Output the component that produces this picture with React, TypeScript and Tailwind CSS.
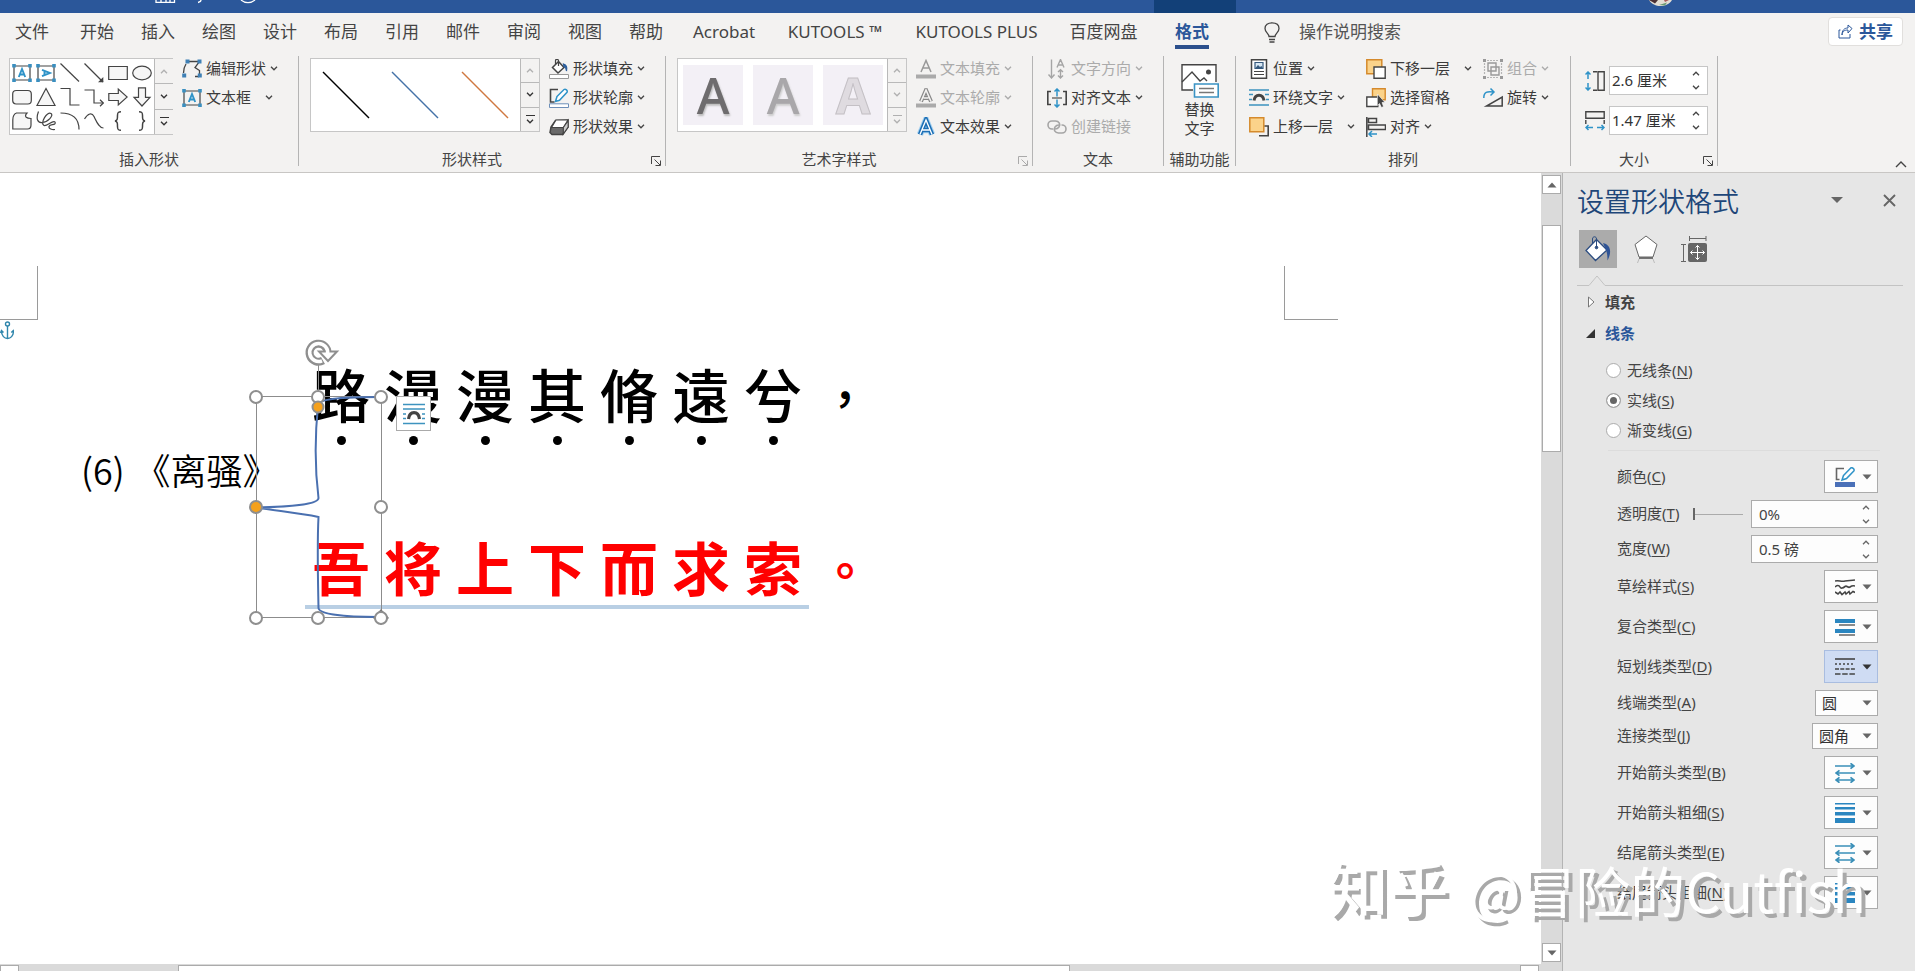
import React from "react";

type IconProps = { children: React.ReactNode; className?: string };

const Icon: React.FC<IconProps> = ({ children, className = "h-5 w-5" }) => (
    <svg viewBox="0 0 20 20" fill="none" stroke="#444" strokeWidth="1.2" className={`shrink-0 ${className}`}>
        {children}
    </svg>
);

const Chevron: React.FC<{ up?: boolean; color?: string }> = ({ up, color = "#444" }) => (
    <svg viewBox="0 0 8 5" fill="none" stroke={color} strokeWidth="1.3" className="h-[5px] w-2 shrink-0">
        <path d={up ? "M1 4.2 4 1.2 7 4.2" : "M1 .8 4 3.8 7 .8"} />
    </svg>
);

const Triangle: React.FC<{ color?: string }> = ({ color = "#666" }) => (
    <svg viewBox="0 0 10 6" className="h-[6px] w-[10px] shrink-0" fill={color}>
        <path d="M.5 .5h9L5 5.5z" />
    </svg>
);

/* Ribbon icons */
const textBoxFrame = (
    <>
        <path d="M2 3h16v14H2z" stroke="#444" />
        <path d="M.2 1h3.600v3.600H.2zM16.200 1h3.600v3.600h-3.600zM.2 15.400h3.600V19H.2zM16.200 15.400h3.600V19h-3.600z" fill="#3a8fc0" stroke="none" />
    </>
);
const letterA = <path d="M6.800 14 10 6l3.200 8M8 11.500h4" stroke="#2f93c8" strokeWidth="1.9" />;

const shapeIcons: React.ReactNode[] = [
    <>{textBoxFrame}{letterA}</>,
    <>{textBoxFrame}<g transform="rotate(90 10 10)">{letterA}</g></>,
    <path d="M.5 .5 19 18.500" />,
    <><path d="M.5 .5 19 19" /><path d="M19.300 14v5.300H14z" fill="#444" stroke="none" /></>,
    <path d="M.7 3.500h18.600v13H.7z" fill="#f6f6f6" />,
    <ellipse cx="10" cy="10" rx="9.3" ry="6.8" fill="#f6f6f6" />,
    <rect x=".7" y="3.5" width="18.6" height="13.5" rx="3.5" fill="#f6f6f6" />,
    <path d="M10 1.500 19 18.500H1z" fill="#f6f6f6" />,
    <path d="M.5 1.500H10v16.500h9.500" />,
    <><path d="M.5 3H10v13h9" /><path d="m16 12.800 3.300 3.200-3.300 3.200" /></>,
    <path d="M.8 6.500h9.500V2l8.900 8-8.900 8v-4.500H.8z" fill="#f6f6f6" />,
    <path d="M6.500 .8h7v9.500H18L10 19 2 10.300h4.500z" fill="#f6f6f6" />,
    <path d="M4.500 2H15c-3.500 4 0 5.500 4 5.500V14c0 3-1 4-3.500 4H.8V9c0-4 1-6 3.700-7z" fill="#f6f6f6" />,
    <path d="M2.500 .5C0 7 1 12 6 11.500 12 11 18 4.500 15 2.500 11 0 4 12 8 14.500c3 1 9-6 11-3.500 1.500 4-5 1.500-6 4.500-.5 2 3 3.500 6 3" />,
    <path d="M.5 2C11 2 19 6 19 18.500" />,
    <path d="M.5 8C4 2 8 1.500 10 5.500c2.500 5 5 11.500 9.500 11.500" />,
    <path d="M13 .8c-3 0-3.500 1-3.500 3.500 0 3.500 0 5.200-2.500 5.700 2.500.5 2.500 2.200 2.500 5.700 0 2.500.5 3.500 3.500 3.500" strokeWidth="1.5" />,
    <path d="M7 .8c3 0 3.500 1 3.500 3.500 0 3.500 0 5.200 2.500 5.700-2.500.5-2.500 2.200-2.500 5.700 0 2.500-.5 3.500-3.500 3.500" strokeWidth="1.5" />,
];

const editShape = (
    <Icon>
        <path d="M6 2.500h11.500l-4.500 6 4.500 3v4.500M13 17.500h4M4 5C2 8 1.500 11 1.500 14" strokeWidth="1.3" />
        <path d="M3.500 .5h4v4h-4zM15.500 .5h4v4h-4zM.2 14.500h4v4h-4zM15.800 14.500h4v4h-4z" fill="#3f80b5" stroke="none" />
    </Icon>
);
const textBox = <Icon>{textBoxFrame}{letterA}</Icon>;
const fillIcon = (
    <Icon>
        <path d="M9.500 2.500 15 8.500 9 14 3.500 8.500z" fill="#fff" strokeWidth="1.5" />
        <path d="M9.500 7V1.500c0-1.500-3-1.500-3 0V5" />
        <path d="M14.500 5c3 1 4 3 3 7-.3-2.500-1-4-2.500-4.500z" fill="#2c5f9e" stroke="#2c5f9e" />
        <path d="M.5 15.500h19v4H.5z" fill="#fff" stroke="#999" strokeWidth="1" />
    </Icon>
);
const outlineIcon = (
    <Icon>
        <path d="M9 1.500H1.500v12.500h4" strokeWidth="1.6" />
        <path d="m8 8.500 7-7c1.500-1 4 1 3 2.800l-7.500 8L6.500 13.500z" fill="#fff" stroke="#2f93c8" strokeWidth="1.5" />
        <path d="M.5 15.800h19v3.700H.5z" fill="#fff" stroke="#6d8fb8" strokeWidth="1" />
    </Icon>
);
const effectIcon = (
    <Icon>
        <path d="M6.500 3.500 18.500 3l.5 7-5.500 7.500H3L1 15.500 2 10z" fill="#6a6a6a" strokeWidth="1.5" />
        <path d="M7 3h12l-4.500 7.500H2.500z" fill="#fff" />
        <path d="m14.300 10.500 4.900-7v6.500l-4.900 7z" fill="#ccc" />
    </Icon>
);
const textFill = (
    <Icon>
        <path d="M5 13 10 1.500 15 13M7 9h6" stroke="#999" strokeWidth="1.5" />
        <path d="M0 15.500h20v4H0z" fill="#aaa" stroke="none" />
    </Icon>
);
const textOutline = (
    <Icon>
        <path d="M5 13.500 10 2l5 11.500M7.500 10h5" stroke="#888" strokeWidth="4" />
        <path d="M5 13.500 10 2l5 11.500M7.500 10h5" stroke="#f3f2f1" strokeWidth="1.6" />
        <path d="M0 15.500h20v4H0z" fill="#aaa" stroke="none" />
    </Icon>
);
const textEffect = (
    <Icon>
        <path d="M4 17.500 10 3l6 14.500M6.500 13h7" stroke="#a5d1f0" strokeWidth="6.5" />
        <path d="M4 17.500 10 3l6 14.500M6.500 13h7" stroke="#1d6fb5" strokeWidth="4.5" />
        <path d="M4 17.500 10 3l6 14.500M6.500 13h7" stroke="#fff" strokeWidth="1.3" />
    </Icon>
);
const textDirection = (
    <Icon>
        <path
            d="M4.500 .5v18M1.500 15.500l3 3.500 3-3.500M13.500 11v8M11 16.500l2.500 2.500 2.500-2.500M11 13l2.500-2.300L16 13M10 8.500l3.500-8 3.500 8M11.300 6h4.400"
            stroke="#a5a5a5"
            strokeWidth="1.4"
        />
    </Icon>
);
const alignText = (
    <Icon>
        <path d="M4 3.500H.8v13H4M16 3.500h3.200v13H16" strokeWidth="1.6" />
        <path d="M5 10h10" stroke="#777" strokeWidth="1.6" />
        <path d="M10 1v7.500M10 19v-7.500M7.500 3.500 10 1l2.500 2.500M7.500 16.500 10 19l2.500-2.500" stroke="#2f93c8" strokeWidth="1.5" />
    </Icon>
);
const linkIcon = (
    <Icon>
        <path d="M6 12H5a4 4 0 0 1 0-8h3.500c3.500 0 5.500 3.500 3.500 6-1 1.500-2.500 2-4 2" stroke="#a5a5a5" strokeWidth="1.6" />
        <path d="M14.500 8h.5a4 4 0 0 1 0 8h-3.500c-3.500 0-5.500-3.500-3.500-6 1-1.500 2.500-2 4-2" stroke="#a5a5a5" strokeWidth="1.6" />
    </Icon>
);
const positionIcon = (
    <Icon>
        <path d="M2.500 .8h15v18.400h-15z" fill="#fff" strokeWidth="1.5" />
        <path d="M6 3.500h8v6H6z" fill="#d8e8f4" stroke="#35597d" />
        <path d="m6 9.500 3-3.500 2 2 1.500-1 1.500 2.500z" fill="#35597d" stroke="none" />
        <path d="M5 12.500h10M5 15.500h10" />
    </Icon>
);
const wrapIcon = (
    <Icon>
        <path d="M0 2h20M0 6.500h4M16 6.500h4M0 11.500h3M17 11.500h3M0 17h20" stroke="#3d93bf" strokeWidth="1.5" />
        <path d="M5 12.500c1-7 9-7 10 0" stroke="#444" strokeWidth="3" />
    </Icon>
);
const forwardIcon = (
    <Icon>
        <path d="M10 18.800h9.200V9h-4" strokeWidth="1.6" />
        <path d="M.8 .8h14v14H.8z" fill="#fbd38a" stroke="#d58a2c" strokeWidth="1.5" />
    </Icon>
);
const backwardIcon = (
    <Icon>
        <path d="M.8 .8h15v14H.8z" fill="#fbd38a" stroke="#d58a2c" strokeWidth="1.5" />
        <path d="M8 8h11.200v11.200H8z" fill="#fff" strokeWidth="1.4" />
    </Icon>
);
const selectionIcon = (
    <Icon>
        <path d="M6.500 .8h12.700v11H6.500z" fill="#fbd38a" stroke="#d58a2c" strokeWidth="1.4" />
        <path d="M.8 9h11v9.500H.8z" fill="#fff" strokeWidth="1.4" />
        <path d="m11.500 6 7.500 8.500h-3l1.500 4-2 1-2-4-2 2z" fill="#444" stroke="#fff" strokeWidth=".6" />
    </Icon>
);
const alignIcon = (
    <Icon>
        <path d="M.8 0v20M2.500 1.500h8v4h-8zM2.500 8h17v4.500h-17z" strokeWidth="1.5" />
        <path d="M11 17H3.500M6 14l-3 3 3 3" stroke="#2f93c8" strokeWidth="1.5" />
    </Icon>
);
const groupIcon = (
    <Icon>
        <path d="M4 1.500h12M4 18.500h12M1.500 4v12M18.500 4v12" stroke="#b5b5b5" strokeDasharray="2 1" />
        <path d="M5 4h8v8H5zM8 8h8v8H8z" stroke="#999" strokeWidth="1.4" />
        <path d="M0 0h3v3H0zM17 0h3v3h-3zM0 17h3v3H0zM17 17h3v3h-3z" fill="#999" stroke="none" />
    </Icon>
);
const rotateIcon = (
    <Icon>
        <path d="M3.500 18h15.700V9z" strokeWidth="1.5" />
        <path d="M.8 10C.8 4 4 3 10.500 4M7.500 .5 11 4 7.500 7.500" stroke="#2f93c8" strokeWidth="1.5" />
    </Icon>
);
const heightIcon = (
    <Icon>
        <path d="M8 .8h4M8 19.200h4M13 .8h6.200v18.400H13z" strokeWidth="1.4" />
        <path d="M3 1v7M3 19v-7M.5 3.500 3 1l2.500 2.500M.5 16.500 3 19l2.500-2.500" stroke="#2f93c8" strokeWidth="1.5" />
    </Icon>
);
const widthIcon = (
    <Icon>
        <path d="M.8 .8h18.400v6.500H.8zM.8 9v4M19.200 9v4" strokeWidth="1.4" />
        <path d="M1 16.500h7M19 16.500h-7M3.500 14 1 16.500 3.500 19M16.500 14l2.500 2.500-2.500 2.500" stroke="#2f93c8" strokeWidth="1.5" />
    </Icon>
);

/* Ribbon pieces */
type CommandProps = { icon: React.ReactNode; label: string; menu?: boolean; wide?: boolean; disabled?: boolean };

const Command: React.FC<CommandProps> = ({ icon, label, menu = true, wide, disabled }) => (
    <button
        disabled={disabled}
        className="flex h-[29px] items-center gap-1 whitespace-nowrap text-[15px] text-[#3b3b3b] disabled:text-[#ababab]"
    >
        {icon}
        <span className={wide ? "mr-[10px]" : ""}>{label}</span>
        {menu && <Chevron color={disabled ? "#ababab" : "#444"} />}
    </button>
);

const GalleryScroll: React.FC<{ dim?: boolean }> = ({ dim }) => (
    <div className="flex w-[19px] shrink-0 flex-col divide-y divide-[#b9b9b9] border-l border-[#b9b9b9] bg-[#f3f2f1]">
        <button aria-label="上一行" className="flex flex-1 items-center justify-center"><Chevron up color="#b0b0b0" /></button>
        <button aria-label="下一行" className="flex flex-1 items-center justify-center"><Chevron color={dim ? "#b0b0b0" : "#333"} /></button>
        <button aria-label="其他" className="flex flex-1 flex-col items-center justify-center gap-[3px]">
            <span className={dim ? "h-px w-[9px] bg-[#b0b0b0]" : "h-px w-[9px] bg-[#333]"} />
            <Chevron color={dim ? "#b0b0b0" : "#333"} />
        </button>
    </div>
);

type GroupProps = { label: string; width: string; inset?: string; launcher?: string; children: React.ReactNode };

const Group: React.FC<GroupProps> = ({ label, width, inset = "", launcher, children }) => (
    <>
        <section className={`flex h-[115px] shrink-0 flex-col ${width}`}>
            <div className={`flex ${inset}`}>{children}</div>
            <div className="mt-auto flex h-5 items-center text-[15px] text-[#444]">
                <span className="flex-1 text-center whitespace-nowrap">{label}</span>
                {launcher && (
                    <button aria-label={`${label}选项`} className="mt-1 w-5 pl-[6px]">
                        <svg viewBox="0 0 10 10" fill="none" stroke={launcher} className="h-[10px] w-[10px]">
                            <path d="M.5 8V.5H9M3.500 3.500 9 9M9.500 4.500v5h-5" />
                        </svg>
                    </button>
                )}
            </div>
        </section>
        <div className="mt-[2px] h-[110px] w-px shrink-0 bg-[#b4b4b4]" />
    </>
);

const SizeField: React.FC<{ id: string; label: string; icon: React.ReactNode; value: string }> = ({ id, label, icon, value }) => (
    <div className="flex items-center gap-1">
        <label htmlFor={id} aria-label={label}>{icon}</label>
        <div className="flex h-[29px] w-[99px] items-center border border-[#c6c6c6] bg-white pr-[7px] pl-[2px]">
            <input id={id} defaultValue={value} className="w-full min-w-0 text-[15px] text-[#333] outline-none" />
            <div className="flex flex-col gap-[9px]">
                <button aria-label="增大" className="flex"><Chevron up /></button>
                <button aria-label="减小" className="flex"><Chevron /></button>
            </div>
        </div>
    </div>
);

const tabs = [
    { name: "文件", style: "mr-1" },
    { name: "开始", style: "" },
    { name: "插入", style: "" },
    { name: "绘图", style: "" },
    { name: "设计", style: "" },
    { name: "布局", style: "" },
    { name: "引用", style: "" },
    { name: "邮件", style: "" },
    { name: "审阅", style: "" },
    { name: "视图", style: "" },
    { name: "帮助", style: "" },
    { name: "Acrobat", style: "w-[68px]" },
    { name: "KUTOOLS ™", style: "w-[100px]" },
    { name: "KUTOOLS PLUS", style: "w-[129px]" },
    { name: "百度网盘", style: "w-[71px]" },
];

const TitleBar: React.FC = () => (
    <div className="flex h-[13px] shrink-0 bg-[#2b579a]">
        <div className="w-[1154px] shrink-0 pl-[155px]">
            <svg viewBox="0 0 102 13" className="h-[13px] w-[102px]" fill="none" stroke="#fff" strokeWidth="1.3">
                <path d="M1 0v2.300h18.500V0M6 0v2M11 0v2M15 0v2M46 0c0 1-1 2-3 2.500M86 0c4 3.400 10 3.400 14 0" />
            </svg>
        </div>
        <div className="w-[82px] shrink-0 bg-[#124078]" />
        <div className="flex flex-1 justify-end pr-[243px]">
            <svg viewBox="0 0 23 6" className="h-[6px] w-[23px]">
                <path d="M0 0c5 8 18 8 23 0z" fill="#e4ded4" />
                <path d="M0 0h9L6 3.500z" fill="#4b3034" />
                <path d="m10 5 8-2.500-2 3z" fill="#6a9a72" />
                <path d="M15 0h5l-4 2z" fill="#a85a58" />
            </svg>
        </div>
    </div>
);

const TabBar: React.FC = () => (
    <nav className="flex h-[41px] shrink-0 items-start gap-[27px] pr-3 pl-[15px] text-[17px] text-[#444]">
        {tabs.map((tab) => (
            <button key={tab.name} className={`mt-[7px] shrink-0 text-center leading-6 whitespace-nowrap ${tab.style}`}>
                {tab.name}
            </button>
        ))}
        <button className="mt-[7px] ml-[9px] shrink-0 leading-6 font-bold text-[#2b579a]">
            格式
            <span className="mt-px block h-1 bg-[#2b4f8c]" />
        </button>
        <label htmlFor="tell-me" className="mt-[9px] ml-[28px] shrink-0" aria-label="搜索">
            <svg viewBox="0 0 16 21" fill="none" stroke="#444" strokeWidth="1.3" className="h-[21px] w-4">
                <path d="M5 14.500c0-3-4-4-4-8C1 2.800 4 .8 8 .8s7 2 7 5.700c0 4-4 5-4 8zM5 17.500h6M5.500 20h5" />
            </svg>
        </label>
        <input
            id="tell-me"
            placeholder="操作说明搜索"
            className="mt-[7px] -ml-2 h-6 min-w-0 flex-1 leading-6 outline-none placeholder:text-[#555]"
        />
        <button className="mt-1 flex h-[29px] w-[75px] shrink-0 items-center justify-center gap-[6px] rounded-sm border border-[#e1dfdd] bg-white font-bold text-[#2b579a]">
            <svg viewBox="0 0 15 15" fill="none" stroke="#2b579a" className="h-[15px] w-[15px]">
                <path d="M2.500 6H1v8h11v-4M4 11c.5-4 2.500-5 6-5v3l4-4.500-4-3.500v3C6 4 4 6.500 4 11z" />
            </svg>
            共享
        </button>
    </nav>
);

const Ribbon: React.FC = () => (
    <div className="flex h-[119px] shrink-0 overflow-hidden border-b border-[#c8c6c4]">
        <Group label="插入形状" width="w-[298px]" inset="pl-[9px]">
            <div className="mt-1 flex h-[77px] w-[164px] border border-[#c6c6c6] bg-white">
                <div className="grid grid-cols-[repeat(6,24px)] grid-rows-[repeat(3,24px)] place-items-center pt-[2px]">
                    {shapeIcons.map((shape, i) => (
                        <button key={i} aria-label={`形状 ${i + 1}`}><Icon>{shape}</Icon></button>
                    ))}
                </div>
                <GalleryScroll />
            </div>
            <div className="ml-[9px]">
                <Command icon={editShape} label="编辑形状" />
                <Command icon={textBox} label="文本框" wide />
            </div>
        </Group>

        <Group label="形状样式" width="w-[366px]" inset="pl-[11px]" launcher="#444">
            <div className="mt-1 flex h-[74px] w-[230px] border border-[#c6c6c6] bg-white">
                <div className="flex flex-1 justify-around">
                    {["#000", "#4472a8", "#d07840"].map((color) => (
                        <button key={color} aria-label="线条样式">
                            <svg viewBox="0 0 48 48" className="h-12 w-12" stroke={color} strokeWidth="1.4">
                                <path d="M1 1 47 47" />
                            </svg>
                        </button>
                    ))}
                </div>
                <GalleryScroll />
            </div>
            <div className="ml-[9px]">
                <Command icon={fillIcon} label="形状填充" />
                <Command icon={outlineIcon} label="形状轮廓" />
                <Command icon={effectIcon} label="形状效果" />
            </div>
        </Group>

        <Group label="艺术字样式" width="w-[366px]" inset="pl-[11px]" launcher="#aaa">
            <div className="mt-1 flex h-[74px] w-[230px] border border-[#c6c6c6] bg-white">
                <div className="flex flex-1 items-center gap-[10px] pl-[5px] text-[50px] leading-[60px] font-medium">
                    <button className="h-[60px] w-[60px] bg-[#f3f0f6] text-[#6e6c6e] text-shadow-[1px_2px_2px_#bbb]">A</button>
                    <button className="h-[60px] w-[60px] bg-[#f3f0f6] text-[#a9a7aa] text-shadow-[1px_2px_2px_#ccc]">A</button>
                    <button className="h-[60px] w-[60px] bg-[#f3f0f6] font-bold text-[#dfdbe0] [-webkit-text-stroke:1px_#c4c0c5]">A</button>
                </div>
                <GalleryScroll dim />
            </div>
            <div className="ml-[9px]">
                <Command icon={textFill} label="文本填充" disabled />
                <Command icon={textOutline} label="文本轮廓" disabled />
                <Command icon={textEffect} label="文本效果" />
            </div>
        </Group>

        <Group label="文本" width="w-[130px]" inset="pl-[14px]">
            <div>
                <Command icon={textDirection} label="文字方向" disabled />
                <Command icon={alignText} label="对齐文本" />
                <Command icon={linkIcon} label="创建链接" menu={false} disabled />
            </div>
        </Group>

        <Group label="辅助功能" width="w-[71px]">
            <button className="flex w-full flex-col items-center pt-[10px] text-[15px] leading-[19px] text-[#3b3b3b]">
                <svg viewBox="0 0 38 34" fill="none" stroke="#444" strokeWidth="1.4" className="mb-[2px] h-[34px] w-[38px]">
                    <path d="M12 26H1V.8h34V18" fill="#fff" />
                    <path d="m1 18 10-10 8 9 4-3 3 3" />
                    <circle cx="27.5" cy="8" r="1.8" fill="#444" />
                    <path d="M13.500 20h23.700v13H13.500z" fill="#fff" stroke="#3a93c4" strokeWidth="1.6" />
                    <path d="M18 24.500h15M18 28.500h15" stroke="#777" />
                </svg>
                <span>替换</span>
                <span>文字</span>
            </button>
        </Group>

        <Group label="排列" width="w-[334px]" inset="pl-[13px]">
            <div className="w-[117px]">
                <Command icon={positionIcon} label="位置" />
                <Command icon={wrapIcon} label="环绕文字" />
                <Command icon={forwardIcon} label="上移一层" wide />
            </div>
            <div className="w-[117px]">
                <Command icon={backwardIcon} label="下移一层" wide />
                <Command icon={selectionIcon} label="选择窗格" menu={false} />
                <Command icon={alignIcon} label="对齐" />
            </div>
            <div>
                <Command icon={groupIcon} label="组合" disabled />
                <Command icon={rotateIcon} label="旋转" />
            </div>
        </Group>

        <Group label="大小" width="w-[146px]" launcher="#444">
            <div className="flex flex-col gap-[11px] pt-3 pl-[14px]">
                <SizeField id="shape-height" label="高度" icon={heightIcon} value="2.6 厘米" />
                <SizeField id="shape-width" label="宽度" icon={widthIcon} value="1.47 厘米" />
            </div>
        </Group>

        <div className="flex flex-1 items-end justify-end pr-2 pb-1">
            <button aria-label="折叠功能区">
                <svg viewBox="0 0 12 7" fill="none" stroke="#444" strokeWidth="1.4" className="h-[7px] w-3">
                    <path d="m1 6 5-5 5 5" />
                </svg>
            </button>
        </div>
    </div>
);

/* Document */
const verseOne = ["路", "漫", "漫", "其", "脩", "遠", "兮"];
const verseTwo = ["吾", "将", "上", "下", "而", "求", "索"];
const handles = [[8, 52], [133, 52], [133, 162], [8, 273], [70, 273], [133, 273], [70, 52]];

const ShapeSelection: React.FC = () => (
    <svg viewBox="0 -12 144 296" fill="none" className="absolute top-[160px] left-[248px] h-[296px] w-[144px]">
        <path d="M8.500 51.500h125v221h-125zM70.500 20v32" stroke="#8c8c8c" />
        <path
            d="M133 52C100 52 70 53 70 60C67 90 67 125 70.500 153C70.500 159 45 162 8 162.500C30 166 50 168 70.500 172C69 200 70 235 70.500 263C71 269 95 272 130 272"
            stroke="#4a70b0"
            strokeWidth="2"
        />
        <path d="m133 264 8 9-8 7-8-7z" fill="#777" />
        {handles.map(([x, y]) => (
            <circle key={`${x}-${y}`} cx={x} cy={y} r="6" fill="#fff" stroke="#8f8f8f" strokeWidth="2" />
        ))}
        <circle cx="70" cy="62" r="5.5" fill="#f5a11c" stroke="#8f8f8f" strokeWidth="2" />
        <circle cx="8" cy="162" r="6" fill="#f5a11c" stroke="#8f8f8f" strokeWidth="2" />
        {/* rotation handle */}
        <path d="M79.500 8A9 9 0 1 0 75 15.500" stroke="#8f8f8f" strokeWidth="8" />
        <path d="M71 6.500h18l-9 9.500z" fill="#fff" stroke="#8f8f8f" strokeWidth="2" />
        <path d="M79.500 9A9 9 0 1 0 74 15.800" stroke="#fff" strokeWidth="3.6" />
    </svg>
);

const Page: React.FC = () => (
    <main className="relative min-w-0 flex-1 overflow-hidden bg-white pt-[187px] text-black">
        {/* margin marks */}
        <div className="absolute top-[93px] left-0 h-[54px] w-[38px] border-r border-b border-[#9a9a9a]" />
        <div className="absolute top-[93px] left-[1284px] h-[54px] w-[54px] border-b border-l border-[#9a9a9a]" />
        <svg viewBox="0 0 14 19" fill="none" stroke="#2f86ac" strokeWidth="1.4" className="absolute top-[148px] left-0 h-[19px] w-[14px]">
            <circle cx="7.5" cy="3" r="2" />
            <path d="M7.500 5v13M1.500 10c0 5 3 7.500 6 7.500s6-2.500 6-7.500M.5 12l1-2.500 2 2M14 12l-.7-2.500-2 2" />
        </svg>

        <div className="flex h-[76px] pl-[305px] text-[58px] leading-[72px] font-medium">
            {verseOne.map((char, i) => (
                <span key={i} className="w-[72px] shrink-0 text-center">{char}</span>
            ))}
            <span className="w-[72px] shrink-0 text-center font-['Noto_Sans_CJK_TC',sans-serif] text-[48px]">，</span>
        </div>
        <div className="flex pl-[305px]">
            {verseOne.map((_, i) => (
                <span key={i} className="flex w-[72px] shrink-0 justify-center">
                    <span className="h-[9px] w-[9px] rounded-full bg-black" />
                </span>
            ))}
        </div>
        <p className="mt-1 flex gap-[10px] pl-[81px] font-['Noto_Sans_CJK_SC',sans-serif] text-[36px] leading-10 font-[350]">
            <span>(6)</span>
            <span>《离骚》</span>
        </p>
        <div className="mt-[43px] flex pl-[305px] text-[58px] leading-[73px] font-bold text-[#f00]">
            <div className="flex border-b-4 border-[#b9cfe4]">
                {verseTwo.map((char) => (
                    <span key={char} className="w-[72px] shrink-0 text-center">{char}</span>
                ))}
            </div>
            <span className="w-[72px] shrink-0 text-center font-['Noto_Sans_CJK_TC',sans-serif] text-[48px]">。</span>
        </div>

        <ShapeSelection />
        <button aria-label="布局选项" className="absolute top-[223px] left-[396px] flex h-[35px] w-[35px] items-center justify-center border border-[#aaa] bg-white">
            <svg viewBox="0 0 22 22" fill="none" className="h-[22px] w-[22px]">
                <path d="M0 1.500h22M0 6h22M0 11h3M19 11h3M0 15.500h3M19 15.500h3M0 20.500h22" stroke="#3d93bf" strokeWidth="1.7" />
                <path d="M5.500 16c1-8.500 10-8.500 11 0" stroke="#444" strokeWidth="3.2" />
            </svg>
        </button>
    </main>
);

const VerticalScroll: React.FC = () => (
    <div className="flex w-[21px] shrink-0 flex-col items-center bg-[#dadada] py-[2px]">
        <button aria-label="向上滚动" className="flex h-[19px] w-[19px] items-center justify-center border border-[#ababab] bg-white">
            <span className="rotate-180"><Triangle /></span>
        </button>
        <div className="mt-[31px] h-[227px] w-[19px] border border-[#ababab] bg-white" />
        <button aria-label="向下滚动" className="mt-auto flex h-[19px] w-[19px] items-center justify-center border border-[#ababab] bg-white">
            <Triangle />
        </button>
    </div>
);

const HorizontalScroll: React.FC = () => (
    <div className="flex h-[7px] shrink-0 overflow-hidden bg-[#dadada] pt-px pr-[23px]">
        <button aria-label="向左滚动" className="w-[19px] border border-b-0 border-[#ababab] bg-white" />
        <div className="ml-[159px] w-[892px] border border-b-0 border-[#ababab] bg-white" />
        <button aria-label="向右滚动" className="ml-auto w-[19px] border border-b-0 border-[#ababab] bg-white" />
    </div>
);

/* Format pane */
const MenuButton: React.FC<{ id: string; children: React.ReactNode; active?: boolean }> = ({ id, children, active }) => (
    <button
        id={id}
        className={`flex h-[33px] w-[54px] items-center gap-[7px] border pl-[10px] ${active ? "border-[#a9bde0] bg-[#cfdcf3]" : "border-[#ababab] bg-[#fdfdfd]"}`}
    >
        {children}
        <Triangle color={active ? "#333" : "#666"} />
    </button>
);

const PaneSpin: React.FC<{ id: string; value: string }> = ({ id, value }) => (
    <div className="flex h-[28px] w-[127px] items-center border border-[#ababab] bg-[#fdfdfd] pr-[7px] pl-[7px]">
        <input id={id} defaultValue={value} className="w-full min-w-0 text-[15px] text-[#444] outline-none" />
        <div className="flex flex-col gap-[9px]">
            <button aria-label="增大" className="flex"><Chevron up color="#666" /></button>
            <button aria-label="减小" className="flex"><Chevron color="#666" /></button>
        </div>
    </div>
);

const PaneSelect: React.FC<{ id: string; value: string; className: string }> = ({ id, value, className }) => (
    <div className="relative flex">
        <select id={id} className={`h-[26px] appearance-none border border-[#ababab] bg-[#fdfdfd] pl-[6px] text-[15px] text-[#333] ${className}`}>
            <option>{value}</option>
        </select>
        <span className="pointer-events-none absolute top-[10px] right-[6px] flex"><Triangle /></span>
    </div>
);

const PaneRow: React.FC<{ id: string; label: string; hotkey: string; children: React.ReactNode }> = ({ id, label, hotkey, children }) => (
    <div className="flex items-center justify-between">
        <label htmlFor={id} className="pb-[2px] leading-5 whitespace-nowrap">
            {label}(<u className="underline-offset-2">{hotkey}</u>)
        </label>
        {children}
    </div>
);

const arrowTypes = (
    <Icon>
        <path
            d="M0 3h19M15.500 .3 19 3l-3.500 2.700M20 10H1M4.500 7.300 1 10l3.500 2.700M1 17h18M4.500 14.300 1 17l3.500 2.700M15.500 14.300 19 17l-3.500 2.700"
            stroke="#3a8fb8"
            strokeWidth="1.7"
        />
    </Icon>
);
const arrowSizes = (
    <Icon>
        <path d="M0 0h20v1.500H0zM0 4h20v2.500H0zM0 9h20v3.500H0zM0 15h20v5H0z" fill="#2b86c0" stroke="none" />
    </Icon>
);

const FormatPane: React.FC = () => (
    <aside className="w-[353px] shrink-0 border-l border-[#b4b4b4] bg-[#e6e6e6] pt-3 text-[15px] text-[#444]">
        <div className="flex h-[34px] items-center pr-[19px] pl-[14px]">
            <h2 className="flex-1 text-[27px] leading-[34px] font-[350] text-[#1e4679]">设置形状格式</h2>
            <button aria-label="任务窗格选项" className="mr-[40px] mb-1">
                <svg viewBox="0 0 12 6" className="h-[6px] w-3" fill="#666"><path d="M0 0h12L6 6z" /></svg>
            </button>
            <button aria-label="关闭" className="mb-1">
                <svg viewBox="0 0 13 13" stroke="#666" strokeWidth="1.9" className="h-[13px] w-[13px]"><path d="m1 1 11 11M12 1 1 12" /></svg>
            </button>
        </div>

        <div className="mt-[11px] flex gap-[10px] pl-4">
            <button aria-label="填充与线条" className="flex h-[38px] w-[38px] items-center justify-center bg-[#ababab]">
                <svg viewBox="0 0 26 26" fill="none" stroke="#2b4c80" className="h-[26px] w-[26px]">
                    <path d="M11.500 3.500 22 14 10.500 24.500 1 14.500z" fill="#fff" strokeWidth="1.3" />
                    <path d="M11.500 11V3c0-3-4-3-4 0v5" />
                    <circle cx="11.5" cy="11.5" r="1.3" fill="#2b4c80" />
                    <path d="M18 7c7 1.500 9.500 8 4.500 17.500 0-5-.5-8-1.500-10.500z" fill="#2f5496" stroke="none" />
                </svg>
            </button>
            <button aria-label="效果" className="flex h-[38px] w-[38px] items-center justify-center">
                <svg viewBox="0 0 24 28" fill="none" stroke="#666" className="h-7 w-6">
                    <path d="M12 1 23 9.500 19 22H5L1 9.500z" fill="#fff" />
                    <path d="M5 23h14" strokeWidth="1.8" />
                    <path d="m5 24-1.500 4M19 24l1.500 4" stroke="#bbb" />
                </svg>
            </button>
            <button aria-label="布局属性" className="flex h-[38px] w-[38px] items-center justify-center">
                <svg viewBox="0 0 26 28" fill="none" stroke="#666" className="h-7 w-[26px]">
                    <rect x="7" y="8" width="19" height="19" rx="2" fill="#666" stroke="none" />
                    <path d="M8 3.500h17M8.500 1v5M25 1v5M2.500 9v17M0 9.500h5M0 26.500h5" />
                    <path d="M16.500 10.500v14M9.500 17.500h14M14.500 12.500l2-2 2 2M14.500 22.500l2 2 2-2M11.500 15.500l-2 2 2 2M21.500 15.500l2 2-2 2" stroke="#fff" />
                </svg>
            </button>
        </div>

        <div className="mt-[7px] mr-3 ml-[14px] flex items-end">
            <span className="h-px w-3 bg-[#c3c3c3]" />
            <svg viewBox="0 0 16 11" fill="none" stroke="#c3c3c3" className="h-[11px] w-4"><path d="m0 10.500 8-9.500 8 9.500" /></svg>
            <span className="h-px flex-1 bg-[#c3c3c3]" />
        </div>

        <button className="mt-[6px] ml-[25px] flex h-5 items-center gap-[10px] font-bold">
            <svg viewBox="0 0 7 12" fill="#fff" stroke="#777" className="h-3 w-[7px]"><path d="M.5 1 6 6 .5 11z" /></svg>
            填充
        </button>
        <button className="mt-[11px] ml-[23px] flex h-5 items-center gap-[10px] font-bold text-[#2b579a]">
            <svg viewBox="0 0 9 9" fill="#333" className="h-[9px] w-[9px]"><path d="M9 0v9H0z" /></svg>
            线条
        </button>

        <fieldset className="mt-[17px] flex flex-col gap-[10px] pl-[43px]">
            {[["无线条", "N"], ["实线", "S"], ["渐变线", "G"]].map(([label, hotkey]) => (
                <label key={hotkey} className="flex h-5 items-center gap-[6px]">
                    <input
                        type="radio"
                        name="line"
                        defaultChecked={hotkey === "S"}
                        className="h-[15px] w-[15px] appearance-none rounded-full border border-[#ababab] bg-white checked:bg-[#666] checked:shadow-[inset_0_0_0_3px_#fff]"
                    />
                    <span>{label}(<u className="underline-offset-2">{hotkey}</u>)</span>
                </label>
            ))}
        </fieldset>

        <div className="mt-[10px] mr-[35px] ml-[45px] h-px bg-[#dcdcdc]" />

        <div className="mt-[9px] flex flex-col gap-[7px] pr-[37px] pl-[54px]">
            <PaneRow id="line-color" label="颜色" hotkey="C">
                <MenuButton id="line-color">
                    <Icon>
                        <path d="M9 1.500H1.500v11h3" strokeWidth="1.6" stroke="#666" />
                        <path d="m8.500 8.500 7-7.300c1.500-1.500 4.500 1 3.300 2.800l-7.300 7.500L7 13z" fill="#fff" stroke="#2f93c8" strokeWidth="1.5" />
                        <path d="M0 15h20v5H0z" fill="#4a70b8" stroke="none" />
                    </Icon>
                </MenuButton>
            </PaneRow>
            <PaneRow id="opacity" label="透明度" hotkey="T">
                <div className="flex items-center gap-2">
                    <div className="flex items-center">
                        <span className="h-3 w-[2px] bg-[#666]" />
                        <span className="h-px w-12 bg-[#ababab]" />
                    </div>
                    <PaneSpin id="opacity" value="0%" />
                </div>
            </PaneRow>
            <PaneRow id="line-width" label="宽度" hotkey="W">
                <PaneSpin id="line-width" value="0.5 磅" />
            </PaneRow>
            <PaneRow id="sketch" label="草绘样式" hotkey="S">
                <MenuButton id="sketch">
                    <Icon>
                        <path
                            d="M0 4c4-1 6 1 10 0s6 0 10-1M0 10c2-2 4-2 5 0s3 1 5-.5 3 2 5 .5 3-1.500 5-1M0 15l3 2 2-2 2 2.500 3-2.500 1 2 3-2.500 1 2.500 3-2.500 2 1"
                            strokeWidth="1.6"
                        />
                    </Icon>
                </MenuButton>
            </PaneRow>
            <PaneRow id="compound" label="复合类型" hotkey="C">
                <MenuButton id="compound">
                    <Icon>
                        <path d="M0 2h20v4H0zM0 12h20v4H0z" fill="#2b86c0" stroke="none" />
                        <path d="M4 8h16M4 18h16" stroke="#666" strokeWidth="1.6" />
                    </Icon>
                </MenuButton>
            </PaneRow>
            <PaneRow id="dash" label="短划线类型" hotkey="D">
                <MenuButton id="dash" active>
                    <Icon>
                        <path d="M0 2h20" strokeWidth="1.6" />
                        <path d="M0 7h20" strokeDasharray="2 2" strokeWidth="1.6" />
                        <path d="M0 12h20" strokeDasharray="4 1.3" strokeWidth="1.6" />
                        <path d="M0 17h20" strokeDasharray="5.5 1.7" strokeWidth="1.6" />
                    </Icon>
                </MenuButton>
            </PaneRow>
            <PaneRow id="cap" label="线端类型" hotkey="A">
                <PaneSelect id="cap" value="圆" className="w-[63px]" />
            </PaneRow>
            <PaneRow id="join" label="连接类型" hotkey="J">
                <PaneSelect id="join" value="圆角" className="w-[66px]" />
            </PaneRow>
            <PaneRow id="begin-type" label="开始箭头类型" hotkey="B">
                <MenuButton id="begin-type">{arrowTypes}</MenuButton>
            </PaneRow>
            <PaneRow id="begin-size" label="开始箭头粗细" hotkey="S">
                <MenuButton id="begin-size">{arrowSizes}</MenuButton>
            </PaneRow>
            <PaneRow id="end-type" label="结尾箭头类型" hotkey="E">
                <MenuButton id="end-type">{arrowTypes}</MenuButton>
            </PaneRow>
            <PaneRow id="end-size" label="结尾箭头粗细" hotkey="N">
                <MenuButton id="end-size">{arrowSizes}</MenuButton>
            </PaneRow>
        </div>
    </aside>
);

const App: React.FC = () => {
    return (
        <div className="relative flex h-screen flex-col overflow-hidden bg-[#f3f2f1] font-['Noto_Sans','Noto_Sans_CJK_SC',sans-serif]">
            <TitleBar />
            <TabBar />
            <Ribbon />
            <div className="flex min-h-0 flex-1">
                <div className="flex min-w-0 flex-1 flex-col">
                    <div className="flex min-h-0 flex-1">
                        <Page />
                        <VerticalScroll />
                    </div>
                    <HorizontalScroll />
                </div>
                <FormatPane />
            </div>

            {/* watermark */}
            <div className="pointer-events-none absolute right-[49px] bottom-[44px] flex items-center gap-[20px] leading-[76px] whitespace-nowrap text-white text-shadow-[4px_4px_0_#a9a9a9]">
                <span className="text-[60px] font-medium">知乎</span>
                <span className="font-['Noto_Sans_CJK_SC',sans-serif] text-[55px]">@冒险的Cutfish</span>
            </div>
        </div>
    );
};

export default App;
